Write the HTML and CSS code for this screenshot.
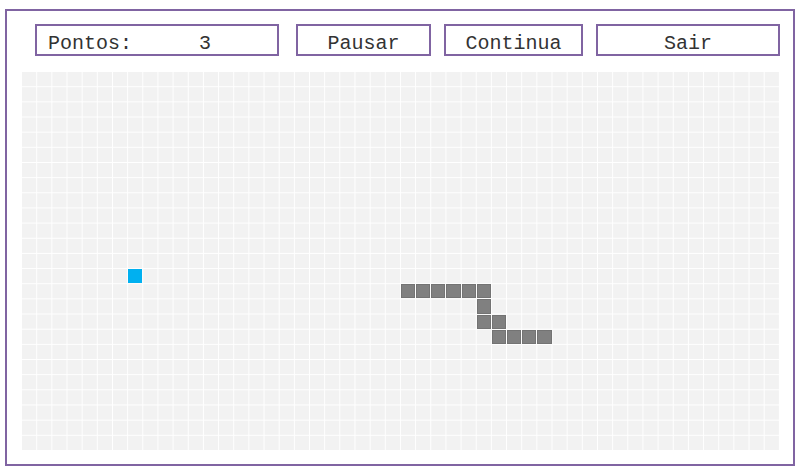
FILE: index.html
```html
<!DOCTYPE html>
<html>
<head>
<meta charset="utf-8">
<link rel="stylesheet" href="styles.css">
</head>
<body>
<div class="frame">
  <div class="toolbar">
    <div class="box score">Pontos:<span class="points">3</span></div>
    <div class="box btn pause">Pausar</div>
    <div class="box btn cont">Continua</div>
    <div class="box btn quit">Sair</div>
  </div>
  <div class="board">
    <div class="cell food" style="grid-area: 14 / 8"></div>
    <div class="cell snake" style="grid-area: 15 / 26"></div>
    <div class="cell snake" style="grid-area: 15 / 27"></div>
    <div class="cell snake" style="grid-area: 15 / 28"></div>
    <div class="cell snake" style="grid-area: 15 / 29"></div>
    <div class="cell snake" style="grid-area: 15 / 30"></div>
    <div class="cell snake" style="grid-area: 15 / 31"></div>
    <div class="cell snake" style="grid-area: 16 / 31"></div>
    <div class="cell snake" style="grid-area: 17 / 31"></div>
    <div class="cell snake" style="grid-area: 17 / 32"></div>
    <div class="cell snake" style="grid-area: 18 / 32"></div>
    <div class="cell snake" style="grid-area: 18 / 33"></div>
    <div class="cell snake" style="grid-area: 18 / 34"></div>
    <div class="cell snake" style="grid-area: 18 / 35"></div>
  </div>
</div>
</body>
</html>
```
FILE: styles.css
```css
html, body {
  margin: 0;
  padding: 0;
  background: #ffffff;
}
body {
  font-family: "Liberation Mono", "Courier New", monospace;
}
.frame {
  margin: 9px 0 0 5px;
  width: 790px;
  height: 457px;
  box-sizing: border-box;
  border: 2px solid #8064a2;
  padding: 13px 0 0 15px;
}
.toolbar {
  display: flex;
  margin-left: 13px;
  height: 32px;
}
.box {
  box-sizing: border-box;
  height: 32px;
  border: 2px solid #8064a2;
  padding-top: 3px;
  font-size: 20px;
  line-height: 29px;
  color: #333333;
  white-space: pre;
}
.score {
  width: 244px;
  padding-left: 11px;
}
.points {
  margin-left: 67px;
}
.btn {
  text-align: center;
}
.pause {
  width: 135px;
  margin-left: 17px;
}
.cont {
  width: 139px;
  margin-left: 13px;
}
.quit {
  width: 184px;
  margin-left: 13px;
}
.board {
  margin-top: 16px;
  width: 757px;
  height: 378px;
  display: grid;
  grid-template-columns: repeat(50, 1fr);
  grid-template-rows: repeat(25, 1fr);
  gap: 1px;
  background-color: #f2f2f2;
  background-image:
    linear-gradient(90deg, transparent 14.16px, #ffffff 14.16px),
    linear-gradient(180deg, transparent 14.16px, #ffffff 14.16px);
  background-size: 15.16px 100%, 100% 15.16px;
}
.cell {
  box-sizing: border-box;
}
.food {
  background: #00b0f0;
}
.snake {
  background: #808080;
  box-shadow: inset 0 0 0 1px #737373;
}
```
